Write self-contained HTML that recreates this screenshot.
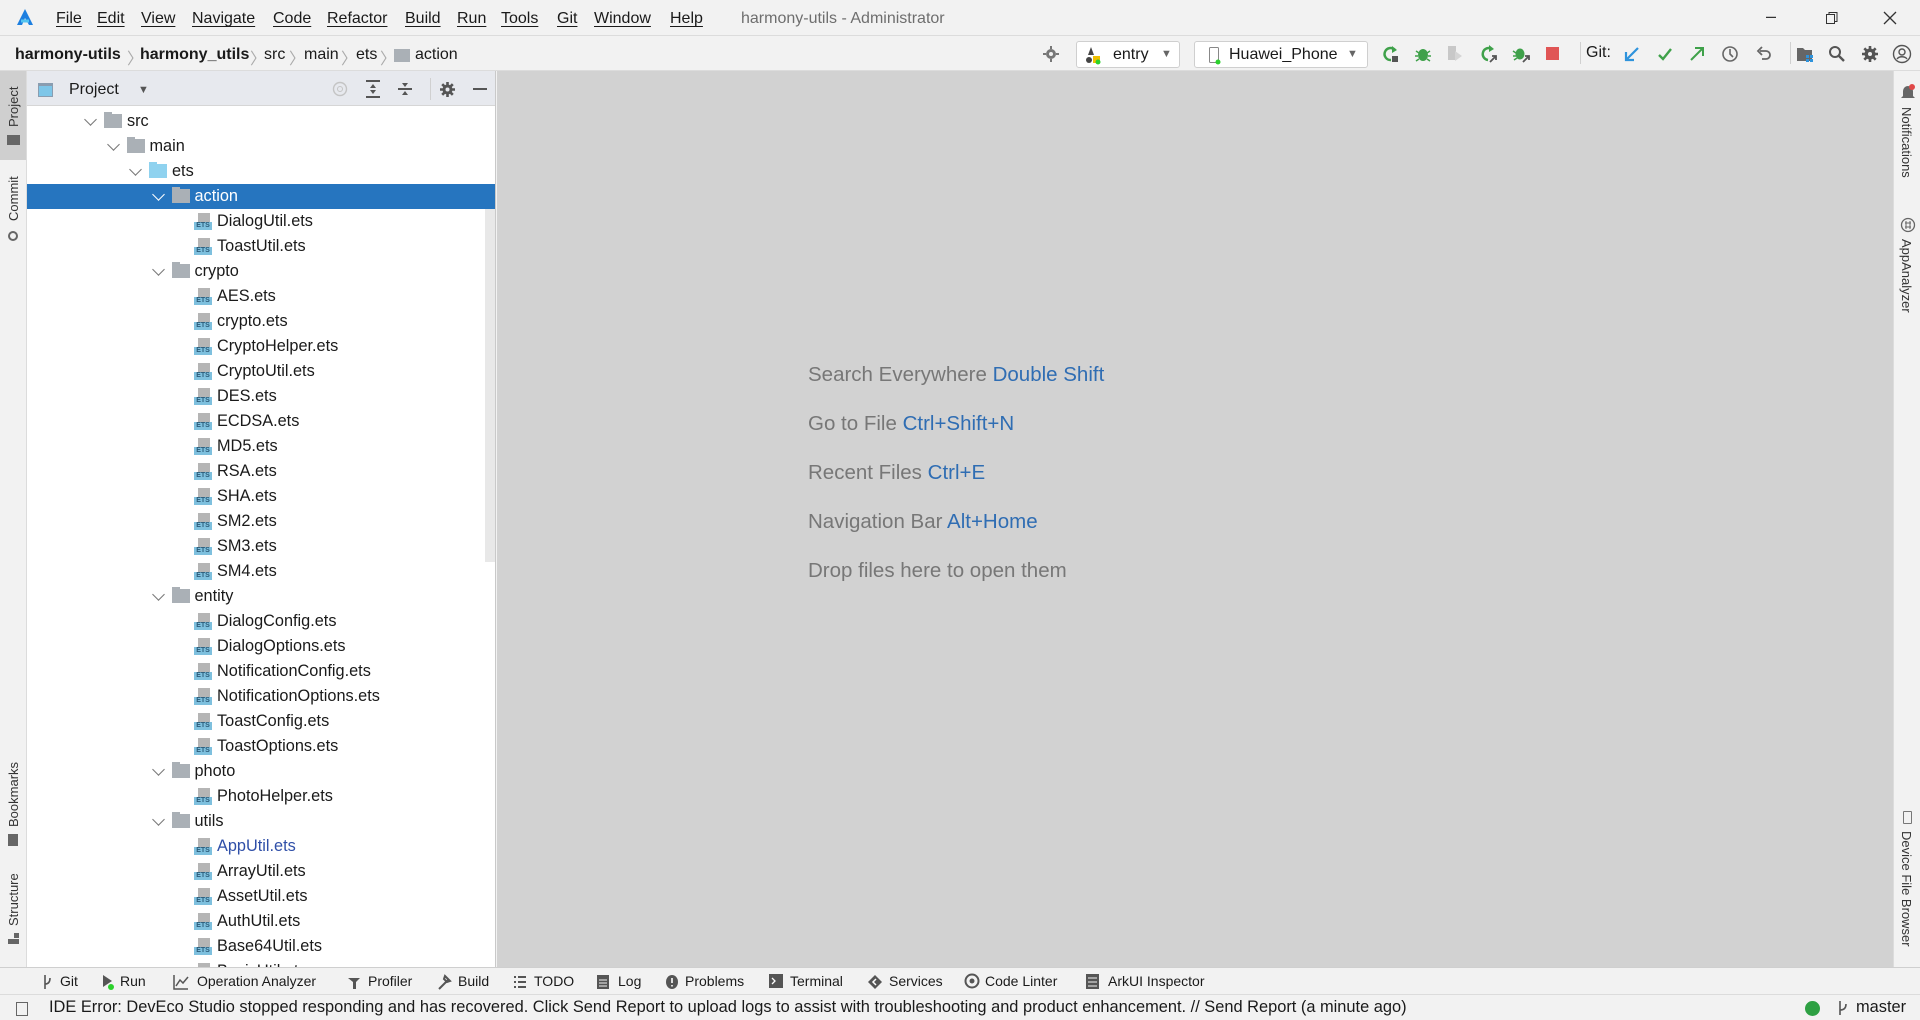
<!DOCTYPE html>
<html><head><meta charset="utf-8">
<style>
*{margin:0;padding:0;box-sizing:border-box}
body{width:1920px;height:1020px;overflow:hidden;background:#f2f2f2;font-family:"Liberation Sans","Noto Sans CJK SC",sans-serif;color:#1a1a1a;position:relative}
.a{position:absolute;white-space:nowrap}
.menu{font-size:16px;top:10px}
.menu span{position:absolute;text-decoration:underline;text-decoration-thickness:1px;text-underline-offset:3px}
#nav{position:absolute;top:35px;left:0;width:1920px;height:36px;border-top:1px solid #dcdcdc;border-bottom:1px solid #dcdcdc;background:#f2f2f2}
#lstripe{position:absolute;left:0;top:71px;width:27px;height:896px;background:#f2f2f2;border-right:1px solid #dcdcdc}
#rstripe{position:absolute;left:1893px;top:71px;width:27px;height:896px;background:#f2f2f2;border-left:1px solid #dcdcdc}
#panel{position:absolute;left:27px;top:71px;width:469px;height:896px;background:#fff;border-right:1px solid #c9c9c9;overflow:hidden}
#phead{position:absolute;left:0;top:0;width:469px;height:35px;background:#e7e9ee;border-bottom:1px solid #d6d6d6}
#editor{position:absolute;left:497px;top:71px;width:1396px;height:896px;background:#d2d2d2}
.row{position:absolute;left:0;width:469px;height:25px;font-size:16.3px;line-height:25px}
.row.sel{background:#2675bf;color:#fff}
.chev{position:absolute;top:6px;width:9px;height:9px;border-right:1.5px solid #777;border-bottom:1.5px solid #777;transform:rotate(45deg)}
.sel .chev{border-color:#fff}
.fold{position:absolute;top:5px;width:18px;height:14px;background:#aab0b6}
.fold:before{content:"";position:absolute;left:0;top:-2px;width:8px;height:3px;background:#aab0b6}
.file{position:absolute;top:4px;width:18px;height:17px}
.file i{position:absolute;left:4px;top:0;width:12px;height:9px;background:#b5b5b5}
.file b{position:absolute;left:0;top:9px;width:18px;height:8px;background:#7ec0de;font-size:7px;line-height:8px;color:#2a5a78;text-align:center;font-weight:bold;font-style:normal}
.hint{position:absolute;left:808px;font-size:20.5px;color:#777;white-space:nowrap}
.hint span{color:#2f6db3}
#btool{position:absolute;left:0;top:967px;width:1920px;height:27px;background:#f2f2f2;border-top:1px solid #cfcfcf;font-size:14px}
#btool div{position:absolute;top:5px}
#status{position:absolute;left:0;top:994px;width:1920px;height:26px;background:#f2f2f2;border-top:1px solid #dcdcdc;font-size:16.4px}
.vl{position:absolute;font-size:13px;color:#333;transform-origin:0 0;white-space:nowrap}
.combo{position:absolute;top:41px;height:27px;background:#fff;border:1px solid #cfcfcf;border-radius:3px;font-size:16px;line-height:25px}
.ic{position:absolute}
</style></head><body>

<svg class="ic" style="left:15px;top:8px" width="20" height="20" viewBox="0 0 20 20"><path d="M10 1 L2 17 L7 17 L10 10 L14 17 L18 17 Z" fill="#1d7fe0"/><path d="M6 13 L14 13" stroke="#53c4f0" stroke-width="3"/></svg>
<div class="a menu">
<span style="left:56px">File</span><span style="left:97px">Edit</span><span style="left:141px">View</span><span style="left:192px">Navigate</span><span style="left:273px">Code</span><span style="left:327px">Refactor</span><span style="left:405px">Build</span><span style="left:457px">Run</span><span style="left:501px">Tools</span><span style="left:557px">Git</span><span style="left:594px">Window</span><span style="left:670px">Help</span>
</div>
<div class="a" style="left:741px;top:10px;font-size:16px;color:#6e6e6e">harmony-utils - Administrator</div>
<div class="a" style="left:1766px;top:6px;font-size:18px;color:#333">–</div>
<svg class="ic" style="left:1825px;top:11px" width="14" height="14"><rect x="1.5" y="3.5" width="8" height="9" fill="none" stroke="#333"/><path d="M4 3.5V1.5h8v9h-2" fill="none" stroke="#333"/></svg>
<svg class="ic" style="left:1882px;top:10px" width="16" height="16"><path d="M2 2L14 14M14 2L2 14" stroke="#333" stroke-width="1.3"/></svg>

<div id="nav">
<div class="a" style="left:15px;top:10px;font-size:16px;font-weight:bold">harmony-utils</div>
<div class="a" style="left:127px;top:9px;font-size:16px;color:#aaa">〉</div>
<div class="a" style="left:140px;top:10px;font-size:16px;font-weight:bold">harmony_utils</div>
<div class="a" style="left:250px;top:9px;font-size:16px;color:#aaa">〉</div>
<div class="a" style="left:264px;top:10px;font-size:16px">src</div>
<div class="a" style="left:289px;top:9px;font-size:16px;color:#aaa">〉</div>
<div class="a" style="left:304px;top:10px;font-size:16px">main</div>
<div class="a" style="left:341px;top:9px;font-size:16px;color:#aaa">〉</div>
<div class="a" style="left:356px;top:10px;font-size:16px">ets</div>
<div class="a" style="left:380px;top:9px;font-size:16px;color:#aaa">〉</div>
<div class="a" style="left:394px;top:13px;width:16px;height:13px;background:#aab0b6"></div>
<div class="a" style="left:415px;top:10px;font-size:16px">action</div>

<svg class="ic" style="left:1043px;top:10px" width="16" height="16"><circle cx="8" cy="8" r="5" fill="#777"/><circle cx="8" cy="8" r="2" fill="#f2f2f2"/><path d="M8 0v3M8 13v3M0 8h3M13 8h3" stroke="#777" stroke-width="2"/></svg>
<div class="combo" style="left:1076px;top:5px;width:104px"><svg class="ic" style="left:8px;top:5px" width="20" height="18"><path d="M6 0L9 8H3Z" fill="#444"/><circle cx="4" cy="13" r="3" fill="#444"/><rect x="8" y="9" width="7" height="7" fill="#f0c000"/><circle cx="13" cy="15" r="2.5" fill="#2bd12b"/></svg><span style="position:absolute;left:36px">entry</span><span style="position:absolute;left:84px;font-size:11px;color:#666">▼</span></div>
<div class="combo" style="left:1194px;top:5px;width:174px"><svg class="ic" style="left:12px;top:5px" width="16" height="18"><rect x="2.5" y="0.5" width="9" height="15" rx="1" fill="none" stroke="#888"/><circle cx="11" cy="15" r="2.5" fill="#2bd12b"/></svg><span style="position:absolute;left:34px">Huawei_Phone</span><span style="position:absolute;left:152px;font-size:11px;color:#666">▼</span></div>

<svg class="ic" style="left:1382px;top:9px" width="18" height="18"><path d="M13 5A6 6 0 1 0 9 15" fill="none" stroke="#3fa14a" stroke-width="2.5"/><path d="M10 1l5 4-5 3z" fill="#3fa14a"/><rect x="10" y="11" width="6" height="6" fill="#555"/></svg>
<svg class="ic" style="left:1414px;top:9px" width="18" height="18"><ellipse cx="9" cy="10" rx="5" ry="6" fill="#3fa14a"/><path d="M2 6l3 2M16 6l-3 2M1 11h3M17 11h-3M2 16l3-2M16 16l-3-2" stroke="#3fa14a" stroke-width="1.5"/></svg>
<svg class="ic" style="left:1446px;top:9px" width="18" height="18"><rect x="2" y="1" width="8" height="14" fill="#c8c8c8"/><path d="M9 6l7 5-7 5z" fill="#d5d5d5"/></svg>
<svg class="ic" style="left:1479px;top:9px" width="18" height="18"><path d="M13 4A6 6 0 1 0 9 15" fill="none" stroke="#3fa14a" stroke-width="2.5"/><path d="M10 0l5 4-5 3z" fill="#3fa14a"/><path d="M11 17l6-6M13 11h4v4" stroke="#555" stroke-width="1.8" fill="none"/></svg>
<svg class="ic" style="left:1512px;top:9px" width="18" height="18"><ellipse cx="8" cy="9" rx="4.5" ry="5.5" fill="#3fa14a"/><path d="M1 6l3 2M1 11h3M2 15l3-2" stroke="#3fa14a" stroke-width="1.5"/><path d="M11 17l6-6M13 11h4v4" stroke="#555" stroke-width="1.8" fill="none"/></svg>
<svg class="ic" style="left:1545px;top:10px" width="16" height="16"><rect x="1" y="1" width="13" height="13" fill="#e05555"/></svg>
<div class="a" style="left:1580px;top:6px;width:1px;height:22px;background:#d0d0d0"></div>
<div class="a" style="left:1586px;top:8px;font-size:16px">Git:</div>
<svg class="ic" style="left:1624px;top:10px" width="16" height="16"><path d="M14 2L3 13M2 6v8h8" stroke="#2e93dc" stroke-width="2.2" fill="none"/></svg>
<svg class="ic" style="left:1657px;top:10px" width="16" height="16"><path d="M2 9l4 4 8-10" stroke="#3fa14a" stroke-width="2.4" fill="none"/></svg>
<svg class="ic" style="left:1689px;top:10px" width="16" height="16"><path d="M2 14L13 3M6 2h8v8" stroke="#3fa14a" stroke-width="2" fill="none"/></svg>
<svg class="ic" style="left:1721px;top:9px" width="18" height="18"><circle cx="9" cy="9" r="7" fill="none" stroke="#666" stroke-width="1.6"/><path d="M9 4v5l3 3" stroke="#666" stroke-width="1.6" fill="none"/></svg>
<svg class="ic" style="left:1755px;top:9px" width="18" height="18"><path d="M5 6h6a4 4 0 0 1 0 8H7" stroke="#666" stroke-width="1.8" fill="none"/><path d="M7 2L3 6l4 4" stroke="#666" stroke-width="1.8" fill="none"/></svg>
<div class="a" style="left:1790px;top:6px;width:1px;height:22px;background:#d0d0d0"></div>
<svg class="ic" style="left:1796px;top:9px" width="18" height="18"><path d="M1 3h6l2 2h7v11H1z" fill="#666"/><rect x="10" y="10" width="3" height="3" fill="#2e93dc"/><rect x="14" y="10" width="3" height="3" fill="#2e93dc"/><rect x="14" y="14" width="3" height="3" fill="#2e93dc"/><rect x="10" y="14" width="3" height="3" fill="#2e93dc"/></svg>
<svg class="ic" style="left:1828px;top:9px" width="18" height="18"><circle cx="7" cy="7" r="5" fill="none" stroke="#555" stroke-width="2"/><path d="M11 11l5 5" stroke="#555" stroke-width="2.4"/></svg>
<svg class="ic" style="left:1861px;top:9px" width="18" height="18"><circle cx="9" cy="9" r="5.5" fill="#555"/><path d="M9 1v16M1 9h16M3.3 3.3l11.4 11.4M14.7 3.3L3.3 14.7" stroke="#555" stroke-width="2.6"/><circle cx="9" cy="9" r="2" fill="#f2f2f2"/></svg>
<svg class="ic" style="left:1892px;top:8px" width="20" height="20"><circle cx="10" cy="10" r="8.5" fill="none" stroke="#555" stroke-width="1.4"/><circle cx="10" cy="8" r="3" fill="none" stroke="#555" stroke-width="1.4"/><path d="M5 15c2-3 8-3 10 0" stroke="#555" stroke-width="1.4" fill="none"/></svg>
</div>

<div id="lstripe">
<div class="a" style="left:0;top:0;width:26px;height:89px;background:#cfcfcf"></div>
<div class="vl" style="left:6px;top:56px;transform:rotate(-90deg)">Project</div>
<div class="a" style="left:7px;top:64px;width:13px;height:10px;background:#666"></div>
<div class="vl" style="left:6px;top:150px;transform:rotate(-90deg)">Commit</div>
<div class="a" style="left:8px;top:160px;width:10px;height:10px;border:2px solid #666;border-radius:50%"></div>
<div class="vl" style="left:6px;top:756px;transform:rotate(-90deg)">Bookmarks</div>
<div class="a" style="left:8px;top:763px;width:10px;height:12px;background:#666"></div>
<div class="vl" style="left:6px;top:855px;transform:rotate(-90deg)">Structure</div>
<div class="a" style="left:8px;top:862px;width:11px;height:11px;background:linear-gradient(#666,#666) 6px 0/5px 5px no-repeat,linear-gradient(#666,#666) 0 6px/11px 5px no-repeat"></div>
</div>

<div id="panel">
<div id="phead">
<div class="a" style="left:11px;top:12px;width:15px;height:14px;border:1px solid #8a9db0;background:#7ec6e8;border-top-width:3px"></div>
<div class="a" style="left:42px;top:10px;font-size:16px">Project</div>
<div class="a" style="left:111px;top:13px;font-size:11px;color:#555">▼</div>
<svg class="ic" style="left:305px;top:10px" width="16" height="16"><circle cx="8" cy="8" r="6.5" fill="none" stroke="#c4c4c4" stroke-width="1.4"/><circle cx="8" cy="8" r="2.5" fill="none" stroke="#c4c4c4"/></svg>
<svg class="ic" style="left:338px;top:9px" width="16" height="18"><path d="M1 1h14M1 17h14" stroke="#555" stroke-width="2"/><path d="M8 4l-3 4h6zM8 14l-3-4h6z" fill="#555"/></svg>
<svg class="ic" style="left:370px;top:9px" width="16" height="18"><path d="M1 9h14" stroke="#555" stroke-width="2"/><path d="M8 7l-3-4h6zM8 11l-3 4h6z" fill="#555"/></svg>
<div class="a" style="left:403px;top:7px;width:1px;height:22px;background:#d0d0d0"></div>
<svg class="ic" style="left:412px;top:10px" width="17" height="17"><circle cx="8.5" cy="8.5" r="5" fill="#555"/><path d="M8.5 1v15M1 8.5h15M3.2 3.2l10.6 10.6M13.8 3.2L3.2 13.8" stroke="#555" stroke-width="2.6"/><circle cx="8.5" cy="8.5" r="2" fill="#e7e9ee"/></svg>
<div class="a" style="left:446px;top:17px;width:14px;height:2px;background:#555"></div>
</div>
<div class="a" style="left:458px;top:137px;width:10px;height:354px;background:#e8e8e8"></div>
<div id="tree"></div>
</div>

<div id="editor"></div>
<div class="hint" style="top:363px">Search Everywhere <span>Double Shift</span></div>
<div class="hint" style="top:412px">Go to File <span>Ctrl+Shift+N</span></div>
<div class="hint" style="top:461px">Recent Files <span>Ctrl+E</span></div>
<div class="hint" style="top:510px">Navigation Bar <span>Alt+Home</span></div>
<div class="hint" style="top:559px">Drop files here to open them</div>

<div id="rstripe">
<svg class="ic" style="left:6px;top:12px" width="16" height="18"><path d="M3 13V8a5 5 0 0 1 10 0v5l2 2H1z" fill="#666"/><circle cx="12" cy="4" r="3" fill="#e04848"/></svg>
<div class="vl" style="left:20px;top:36px;transform:rotate(90deg)">Notifications</div>
<svg class="ic" style="left:6px;top:146px" width="16" height="16"><circle cx="8" cy="8" r="6.5" fill="none" stroke="#666" stroke-width="1.3"/><path d="M5 6h6M5 10h6M6 4v8M10 4v8" stroke="#666"/></svg>
<div class="vl" style="left:20px;top:168px;transform:rotate(90deg)">AppAnalyzer</div>
<div class="a" style="left:9px;top:740px;width:9px;height:13px;border:1.5px solid #777;border-radius:1px"></div>
<div class="vl" style="left:20px;top:760px;transform:rotate(90deg)">Device File Browser</div>
</div>

<div id="btool">
<svg class="ic" style="left:42px;top:6px" width="10" height="16"><path d="M3 1v14M3 10c4 0 5-3 5-6" stroke="#555" stroke-width="1.6" fill="none"/></svg><div style="left:60px">Git</div>
<svg class="ic" style="left:101px;top:6px" width="14" height="16"><path d="M2 1l9 6-9 6z" fill="#555"/><circle cx="10" cy="13" r="3" fill="#2bd12b"/></svg><div style="left:120px">Run</div>
<svg class="ic" style="left:173px;top:6px" width="16" height="16"><path d="M1 1v14h14" stroke="#555" stroke-width="1.5" fill="none"/><path d="M3 12l4-6 3 3 5-6" stroke="#555" stroke-width="1.5" fill="none"/></svg><div style="left:197px">Operation Analyzer</div>
<svg class="ic" style="left:346px;top:6px" width="16" height="16"><path d="M2 4h12l-4 4v7H7V8z" fill="#555"/></svg><div style="left:368px">Profiler</div>
<svg class="ic" style="left:436px;top:6px" width="16" height="16"><path d="M3 15L12 6M9 2l5 5-3 1-3-3z" stroke="#555" stroke-width="2" fill="none"/></svg><div style="left:458px">Build</div>
<svg class="ic" style="left:513px;top:7px" width="14" height="14"><path d="M1 2h2M5 2h8M1 7h2M5 7h8M1 12h2M5 12h8" stroke="#555" stroke-width="2"/></svg><div style="left:534px">TODO</div>
<svg class="ic" style="left:596px;top:5px" width="14" height="17"><rect x="1" y="2" width="12" height="14" fill="#555"/><path d="M3 7h8M3 10h8M3 13h8" stroke="#f2f2f2"/></svg><div style="left:618px">Log</div>
<svg class="ic" style="left:665px;top:6px" width="14" height="16"><ellipse cx="7" cy="8" rx="6" ry="7" fill="#555"/><path d="M7 4v5M7 11v1.5" stroke="#fff" stroke-width="1.6"/></svg><div style="left:685px">Problems</div>
<svg class="ic" style="left:769px;top:6px" width="15" height="15"><rect x="0" y="0" width="14" height="14" fill="#555"/><path d="M3 4l3 3-3 3" stroke="#fff" stroke-width="1.3" fill="none"/></svg><div style="left:790px">Terminal</div>
<svg class="ic" style="left:867px;top:6px" width="16" height="16"><path d="M8 1l7 7-7 7-7-7z" fill="#555"/><path d="M9 5l-3 3 3 3" stroke="#fff" stroke-width="1.5" fill="none"/></svg><div style="left:889px">Services</div>
<svg class="ic" style="left:964px;top:5px" width="16" height="17"><circle cx="8" cy="8" r="6.5" fill="none" stroke="#555" stroke-width="2"/><circle cx="8" cy="8" r="2.5" fill="#555"/></svg><div style="left:985px">Code Linter</div>
<svg class="ic" style="left:1085px;top:5px" width="15" height="17"><rect x="1" y="1" width="13" height="15" fill="#555"/><path d="M3 5h9M3 9h9M3 13h9" stroke="#f2f2f2"/></svg><div style="left:1108px">ArkUI Inspector</div>
</div>

<div id="status">
<div class="a" style="left:16px;top:7px;width:12px;height:14px;border:1.5px solid #666"></div>
<div class="a" style="left:49px;top:3px">IDE Error: DevEco Studio stopped responding and has recovered. Click Send Report to upload logs to assist with troubleshooting and product enhancement. // Send Report (a minute ago)</div>
<div class="a" style="left:1805px;top:6px;width:15px;height:15px;border-radius:50%;background:#2ea043"></div>
<svg class="ic" style="left:1837px;top:5px" width="12" height="16"><path d="M3 1v14M3 10c5 0 6-3 6-6" stroke="#555" stroke-width="1.6" fill="none"/></svg>
<div class="a" style="left:1856px;top:3px">master</div>
</div>

<script>
var items=[["src",0,"d"],["main",1,"d"],["ets",2,"e"],["action",3,"s"],["DialogUtil.ets",4,"f"],["ToastUtil.ets",4,"f"],["crypto",3,"d"],["AES.ets",4,"f"],["crypto.ets",4,"f"],["CryptoHelper.ets",4,"f"],["CryptoUtil.ets",4,"f"],["DES.ets",4,"f"],["ECDSA.ets",4,"f"],["MD5.ets",4,"f"],["RSA.ets",4,"f"],["SHA.ets",4,"f"],["SM2.ets",4,"f"],["SM3.ets",4,"f"],["SM4.ets",4,"f"],["entity",3,"d"],["DialogConfig.ets",4,"f"],["DialogOptions.ets",4,"f"],["NotificationConfig.ets",4,"f"],["NotificationOptions.ets",4,"f"],["ToastConfig.ets",4,"f"],["ToastOptions.ets",4,"f"],["photo",3,"d"],["PhotoHelper.ets",4,"f"],["utils",3,"d"],["AppUtil.ets",4,"b"],["ArrayUtil.ets",4,"f"],["AssetUtil.ets",4,"f"],["AuthUtil.ets",4,"f"],["Base64Util.ets",4,"f"],["BasicUtil.ets",4,"f"]];
var h="";
items.forEach(function(it,i){
 var top=38+25*i, L=it[1]*22.5, t=it[2];
 var off=-27;
 h+='<div class="row'+(t=="s"?' sel':'')+'" style="top:'+top+'px">';
 if(t=="f"||t=="b"){
  h+='<div class="file" style="left:'+(194+L-90+off)+'px"><i></i><b>ETS</b></div>';
  h+='<span style="position:absolute;left:'+(217+L-90+off)+'px'+(t=="b"?';color:#2f4fa8':'')+'">'+it[0]+'</span>';
 } else {
  h+='<div class="chev" style="left:'+(86+L+off)+'px"></div>';
  h+='<div class="fold" style="left:'+(104+L+off)+'px'+(t=="e"?';background:#8fd2ef':'')+'"></div>';
  h+='<span style="position:absolute;left:'+(127+L+off)+'px">'+it[0]+'</span>';
 }
 h+='</div>';
});
document.getElementById("tree").innerHTML=h;
</script>
<style>.fold[style*="8fd2ef"]:before{background:#8fd2ef}.sel .fold,.sel .fold:before{background:#aab0b6}</style>
</body></html>
